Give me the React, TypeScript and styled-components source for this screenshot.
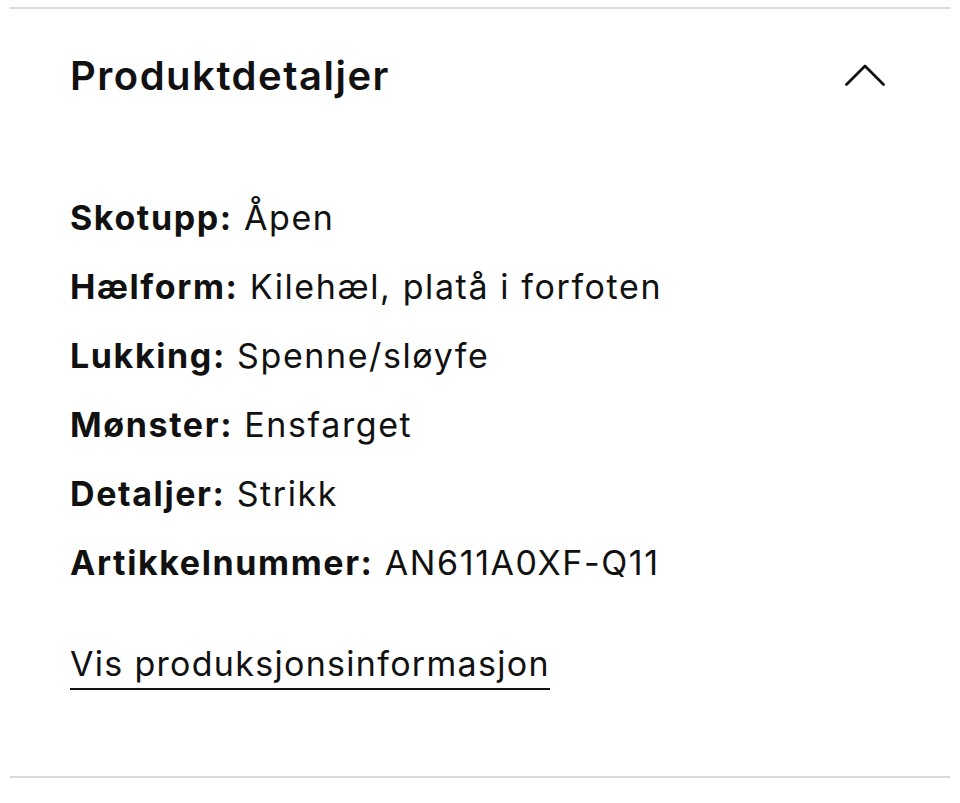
import styled, { createGlobalStyle } from "styled-components";

const GlobalStyle = createGlobalStyle`
  html, body {
    margin: 0;
    padding: 0;
    background: #ffffff;
  }
  body {
    font-family: Inter, "Liberation Sans", Arial, sans-serif;
    color: #111111;
  }
`;

const Section = styled.section`
  margin: 7px 10px 0;
  border-top: 2px solid #d6dadd;
  border-bottom: 2px solid #d6dadd;
`;

const Header = styled.div`
  height: 132px;
  padding: 0 65px 0 60px;

  display: flex;
  justify-content: space-between;
  align-items: center;
`;

const Title = styled.h2`
  margin: 0;
  font-size: 40px;
  font-weight: 600;
  letter-spacing: 1.5px;
  color: #111111;
`;

const Toggle = styled.button`
  width: 40px;
  height: 22px;
  padding: 0;

  display: flex;
  align-items: center;
  justify-content: center;

  border: none;
  background: none;
  cursor: pointer;
`;

const Body = styled.div`
  padding: 53px 60px 86px;
`;

const List = styled.ul`
  margin: 0;
  padding: 0;
  list-style: none;

  display: flex;
  flex-direction: column;
  gap: 21px;
`;

const Item = styled.li`
  font-size: 34px;
  line-height: 48px;
  letter-spacing: 1.6px;
`;

const Label = styled.strong`
  font-weight: 700;
`;

const InfoLink = styled.a`
  display: inline-block;
  margin-top: 53px;

  font-size: 34px;
  line-height: 48px;
  letter-spacing: 1.3px;
  color: #111111;
  text-decoration: none;

  border-bottom: 2px solid #111111;
  cursor: pointer;
`;

const details = [
  { label: "Skotupp", value: "Åpen" },
  { label: "Hælform", value: "Kilehæl, platå i forfoten" },
  { label: "Lukking", value: "Spenne/sløyfe" },
  { label: "Mønster", value: "Ensfarget" },
  { label: "Detaljer", value: "Strikk" },
  { label: "Artikkelnummer", value: "AN611A0XF-Q11" },
];

const ChevronUp = () => (
  <svg width="40" height="22" viewBox="0 0 40 22" fill="none">
    <path
      d="M1.5 20.5 L20 2 L38.5 20.5"
      stroke="#111111"
      strokeWidth="2.8"
      strokeLinecap="round"
      strokeLinejoin="round"
    />
  </svg>
);

const App = () => {
  return (
    <>
      <GlobalStyle />
      <Section>
        <Header>
          <Title>Produktdetaljer</Title>
          <Toggle aria-label="Lukk">
            <ChevronUp />
          </Toggle>
        </Header>
        <Body>
          <List>
            {details.map((d) => (
              <Item key={d.label}>
                <Label>{d.label}:</Label> {d.value}
              </Item>
            ))}
          </List>
          <InfoLink>Vis produksjonsinformasjon</InfoLink>
        </Body>
      </Section>
    </>
  );
};

export default App;
